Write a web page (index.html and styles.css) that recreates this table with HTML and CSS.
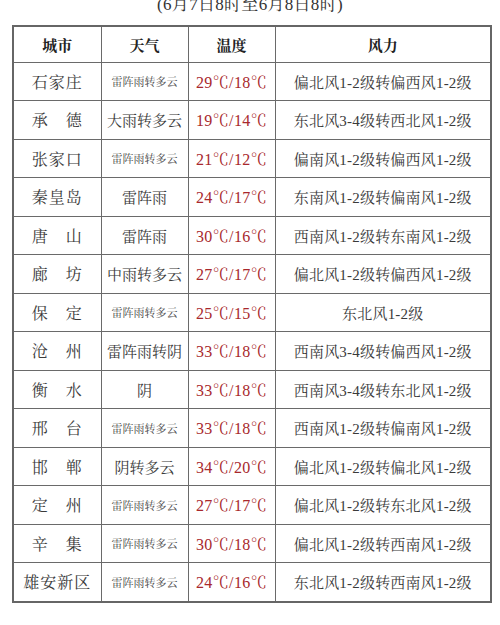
FILE: index.html
```html
<!DOCTYPE html>
<html lang="zh">
<head>
<meta charset="utf-8">
<link rel="stylesheet" href="styles.css">
</head>
<body>
<div class="page">
  <div class="title">(6月7日8时至6月8日8时)</div>
  <table class="weather">
    <colgroup>
      <col class="c-city"><col class="c-wx"><col class="c-temp"><col class="c-wind">
    </colgroup>
    <thead>
      <tr><th>城市</th><th>天气</th><th>温度</th><th>风力</th></tr>
    </thead>
    <tbody>
      <tr><td class="city">石家庄</td><td class="wx small">雷阵雨转多云</td><td class="temp">29℃/18℃</td><td class="wind">偏北风1-2级转偏西风1-2级</td></tr>
      <tr><td class="city">承　德</td><td class="wx">大雨转多云</td><td class="temp">19℃/14℃</td><td class="wind">东北风3-4级转西北风1-2级</td></tr>
      <tr><td class="city">张家口</td><td class="wx small">雷阵雨转多云</td><td class="temp">21℃/12℃</td><td class="wind">偏南风1-2级转偏西风1-2级</td></tr>
      <tr><td class="city">秦皇岛</td><td class="wx">雷阵雨</td><td class="temp">24℃/17℃</td><td class="wind">东南风1-2级转偏南风1-2级</td></tr>
      <tr><td class="city">唐　山</td><td class="wx">雷阵雨</td><td class="temp">30℃/16℃</td><td class="wind">西南风1-2级转东南风1-2级</td></tr>
      <tr><td class="city">廊　坊</td><td class="wx">中雨转多云</td><td class="temp">27℃/17℃</td><td class="wind">偏北风1-2级转偏西风1-2级</td></tr>
      <tr><td class="city">保　定</td><td class="wx small">雷阵雨转多云</td><td class="temp">25℃/15℃</td><td class="wind">东北风1-2级</td></tr>
      <tr><td class="city">沧　州</td><td class="wx">雷阵雨转阴</td><td class="temp">33℃/18℃</td><td class="wind">西南风3-4级转偏西风1-2级</td></tr>
      <tr><td class="city">衡　水</td><td class="wx">阴</td><td class="temp">33℃/18℃</td><td class="wind">西南风3-4级转东北风1-2级</td></tr>
      <tr><td class="city">邢　台</td><td class="wx small">雷阵雨转多云</td><td class="temp">33℃/18℃</td><td class="wind">西南风1-2级转偏南风1-2级</td></tr>
      <tr><td class="city">邯　郸</td><td class="wx">阴转多云</td><td class="temp">34℃/20℃</td><td class="wind">偏北风1-2级转偏北风1-2级</td></tr>
      <tr><td class="city">定　州</td><td class="wx small">雷阵雨转多云</td><td class="temp">27℃/17℃</td><td class="wind">偏北风1-2级转东北风1-2级</td></tr>
      <tr><td class="city">辛　集</td><td class="wx small">雷阵雨转多云</td><td class="temp">30℃/18℃</td><td class="wind">偏北风1-2级转西南风1-2级</td></tr>
      <tr><td class="city">雄安新区</td><td class="wx small">雷阵雨转多云</td><td class="temp">24℃/16℃</td><td class="wind">东北风1-2级转西南风1-2级</td></tr>
    </tbody>
  </table>
</div>
</body>
</html>
```

FILE: styles.css
```css
html, body {
  margin: 0;
  padding: 0;
  background: #ffffff;
}
body {
  font-family: "Liberation Serif", "Noto Serif CJK SC", "Noto Sans CJK SC", serif;
  color: #3a3a3a;
}
.page {
  width: 500px;
  height: 625px;
  overflow: hidden;
}
.title {
  margin-top: -7px;
  height: 32px;
  text-align: center;
  font-size: 17px;
  line-height: 24px;
  color: #333333;
  letter-spacing: 0.3px;
}
.weather {
  margin-left: 12px;
  width: 478px;
  border-collapse: collapse;
  table-layout: fixed;
  border: 2px solid #666666;
}
.c-city { width: 88px; }
.c-wx { width: 87px; }
.c-temp { width: 87px; }
.c-wind { width: 216px; }
.weather th,
.weather td {
  border: 1px solid #6a6a6a;
  text-align: center;
  padding: 0;
  white-space: nowrap;
  overflow: hidden;
}
.weather th {
  height: 34.5px;
  font-size: 15px;
  font-weight: bold;
  color: #222222;
}
.weather td {
  height: 37.5px;
}
.city {
  font-size: 16px;
  letter-spacing: 1px;
  color: #3a3a3a;
}
.wx {
  font-size: 15px;
  color: #3a3a3a;
}
.wx.small {
  font-size: 11px;
  color: #444444;
}
.temp {
  font-size: 16px;
  color: #a8282c;
  letter-spacing: 0.4px;
}
.wind {
  font-size: 15px;
  color: #3a3a3a;
  letter-spacing: 0.2px;
}
```
